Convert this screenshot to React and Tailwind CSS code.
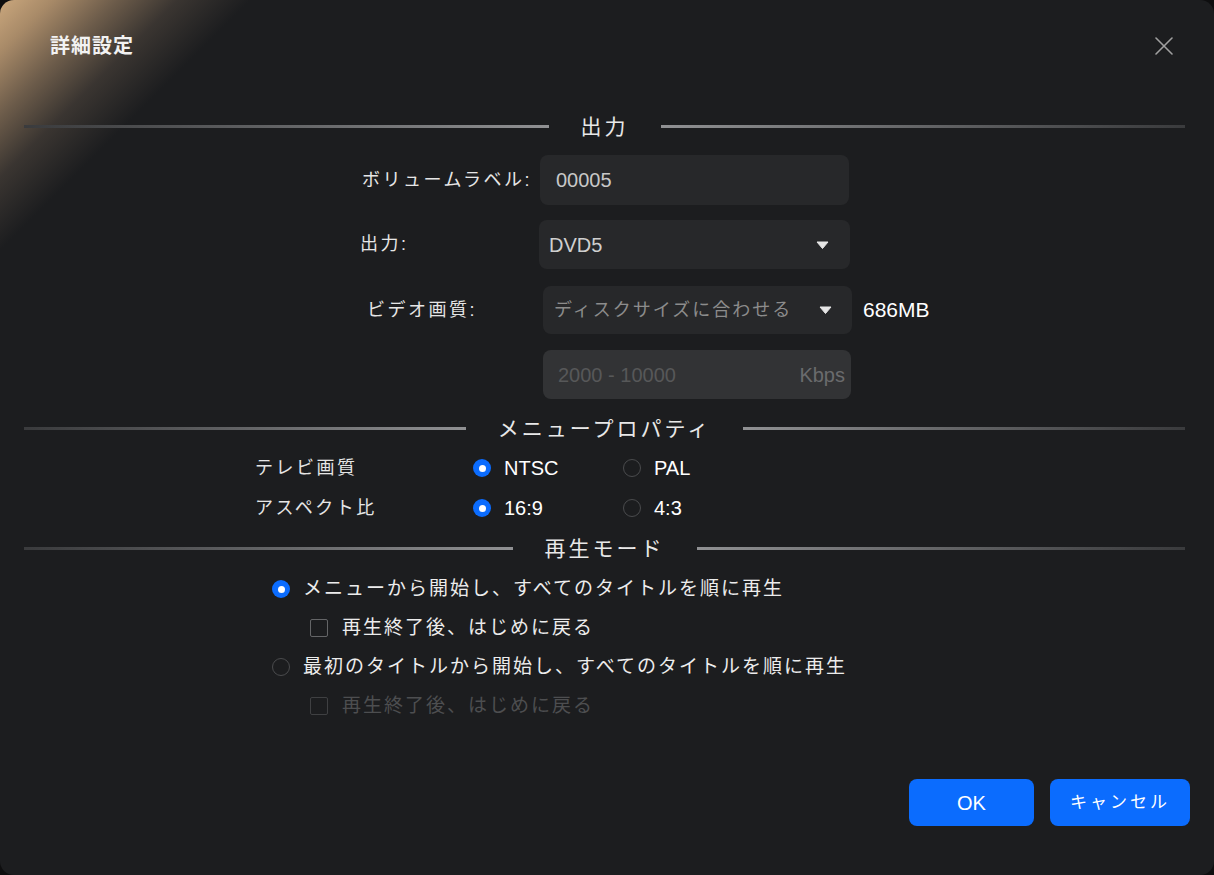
const font = "font-['Liberation_Sans','Noto_Sans_CJK_JP',sans-serif]"

const SectionTitle = ({ title }) => (
  <div className="flex items-center h-[30px] pl-6 pr-[29px]">
    <div className="flex-1 h-[3px] bg-gradient-to-r from-[#3a3b3d] to-[#909193]"></div>
    <div className="px-8 text-[21px] tracking-[3px] text-[#e8e8e8] leading-none">{title}</div>
    <div className="flex-1 h-[3px] bg-gradient-to-r from-[#909193] to-[#3a3b3d]"></div>
  </div>
)

const Caret = () => (
  <svg width="13" height="8" viewBox="0 0 13 8" className="shrink-0">
    <path d="M1 1h11L6.5 7.5z" fill="#e6e6e6" stroke="#e6e6e6" strokeLinejoin="round" strokeWidth="1" />
  </svg>
)

const Radio = ({ checked }) =>
  checked ? (
    <div className="w-[18px] h-[18px] rounded-full bg-[#0b6cfe] flex items-center justify-center shrink-0">
      <div className="w-[7px] h-[7px] rounded-full bg-white"></div>
    </div>
  ) : (
    <div className="w-[18px] h-[18px] rounded-full border-[1.5px] border-[#4a4b4d] shrink-0"></div>
  )

const Checkbox = ({ disabled }) => (
  <div
    className={`w-[18px] h-[18px] rounded-[2px] border-[1.5px] shrink-0 ${
      disabled ? "border-[#3f4042]" : "border-[#646567]"
    }`}
  ></div>
)

export default function App() {
  return (
    <div className={`w-full h-[875px] bg-[#0e0e0f] ${font}`}>
      <div className="h-full rounded-[14px] overflow-hidden bg-[#1c1d1f] bg-[linear-gradient(135deg,#caa77d_0%,#a88a68_2.5%,#6e5d4b_5.5%,#3a3531_8.5%,#1c1d1f_12%)] flex flex-col">
        {/* Header */}
        <div className="h-[92px] flex items-center justify-between pl-[50px] pr-[42px]">
          <h1 className="text-[20px] font-bold tracking-[1px] text-[#f2f2f2]">詳細設定</h1>
          <svg width="18" height="18" viewBox="0 0 18 18" className="mr-[-1px]">
            <path d="M1 1l16 16M17 1L1 17" stroke="#a0a0a0" strokeWidth="1.6" strokeLinecap="round" />
          </svg>
        </div>

        {/* 出力 */}
        <div className="mt-[19px]">
          <SectionTitle title="出力" />
        </div>

        <div className="mt-[14px] flex items-center pl-[362px]">
          <div className="w-[178px] text-[18px] tracking-[2.5px] text-[#e6e6e6]">ボリュームラベル:</div>
          <div className="w-[309px] h-[50px] rounded-[8px] bg-[#27282a] flex items-center px-4 text-[20px] text-[#c8c8c8]">
            00005
          </div>
        </div>

        <div className="mt-[15px] flex items-center pl-[360px]">
          <div className="w-[179px] text-[18px] tracking-[2.5px] text-[#e6e6e6]">出力:</div>
          <div className="w-[311px] h-[49px] rounded-[8px] bg-[#27282a] flex items-center justify-between pl-[10px] pr-[21px] text-[20px] text-[#cfcfcf]">
            <span>DVD5</span>
            <Caret />
          </div>
        </div>

        <div className="mt-[17px] flex items-center pl-[367px]">
          <div className="w-[176px] text-[18px] tracking-[2.5px] text-[#e6e6e6]">ビデオ画質:</div>
          <div className="w-[309px] h-[48px] rounded-[8px] bg-[#27282a] flex items-center justify-between pl-[11px] pr-[20px] text-[18px] tracking-[2px] text-[#8c8c8c]">
            <span>ディスクサイズに合わせる</span>
            <Caret />
          </div>
          <span className="ml-[11px] text-[21px] text-white">686MB</span>
        </div>

        <div className="mt-[16px] flex items-center pl-[543px]">
          <div className="w-[308px] h-[49px] rounded-[8px] bg-[#323335] flex items-center justify-between pl-[15px] pr-[6px] text-[20px]">
            <span className="text-[#575859]">2000 - 10000</span>
            <span className="text-[#6a6b6d]">Kbps</span>
          </div>
        </div>

        {/* メニュープロパティ */}
        <div className="mt-[14px]">
          <SectionTitle title="メニュープロパティ" />
        </div>

        {[
          ["テレビ画質", "NTSC", "PAL"],
          ["アスペクト比", "16:9", "4:3"],
        ].map(([label, a, b], i) => (
          <div key={label} className={`${i === 0 ? "mt-[11px]" : "mt-[12px]"} h-[28px] flex items-center pl-[255px]`}>
            <div className="w-[218px] text-[18px] tracking-[2.5px] text-[#e6e6e6]">{label}</div>
            <div className="w-[150px] flex items-center gap-[13px]">
              <Radio checked />
              <span className="text-[20px] text-white">{a}</span>
            </div>
            <div className="flex items-center gap-[13px]">
              <Radio />
              <span className="text-[20px] text-white">{b}</span>
            </div>
          </div>
        ))}

        {/* 再生モード */}
        <div className="mt-[11px]">
          <SectionTitle title="再生モード" />
        </div>

        <div className="mt-[12px] h-[28px] flex items-center gap-[13px] pl-[272px]">
          <Radio checked />
          <span className="text-[19px] tracking-[2px] text-[#ececec]">メニューから開始し、すべてのタイトルを順に再生</span>
        </div>
        <div className="mt-[11px] h-[28px] flex items-center gap-[14px] pl-[310px]">
          <Checkbox />
          <span className="text-[19px] tracking-[2px] text-[#ececec]">再生終了後、はじめに戻る</span>
        </div>
        <div className="mt-[11px] h-[28px] flex items-center gap-[13px] pl-[272px]">
          <Radio />
          <span className="text-[19px] tracking-[2px] text-[#ececec]">最初のタイトルから開始し、すべてのタイトルを順に再生</span>
        </div>
        <div className="mt-[11px] h-[28px] flex items-center gap-[14px] pl-[310px]">
          <Checkbox disabled />
          <span className="text-[19px] tracking-[2px] text-[#4d4e50]">再生終了後、はじめに戻る</span>
        </div>

        {/* Buttons */}
        <div className="mt-[59px] flex justify-end gap-4 pr-6">
          <button className="w-[125px] h-[47px] rounded-[8px] bg-[#0b6cfe] text-white text-[20px]">OK</button>
          <button className="w-[140px] h-[47px] rounded-[8px] bg-[#0b6cfe] text-white text-[17px] tracking-[3px]">キャンセル</button>
        </div>
      </div>
    </div>
  )
}
